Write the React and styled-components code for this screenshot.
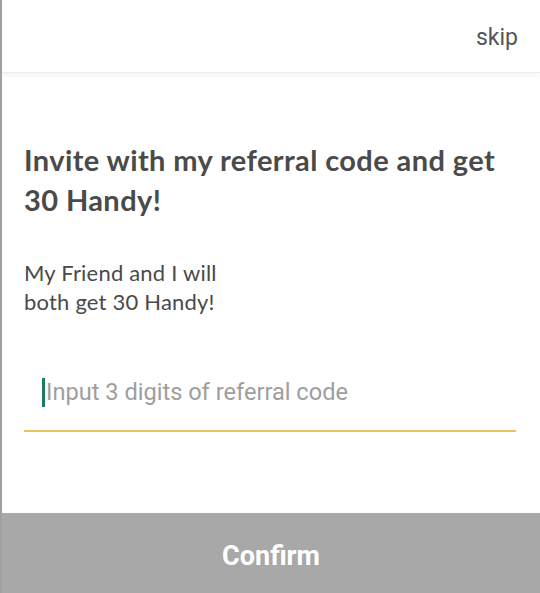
import React from "react";
import styled, { createGlobalStyle } from "styled-components";

const Global = createGlobalStyle`
  html, body { margin: 0; padding: 0; background: #fff; }
  #root { height: 593px; }
`;

const Screen = styled.div`
  height: 593px;
  display: flex;
  flex-direction: column;
  border-left: 2px solid #a0a0a0;
  box-sizing: border-box;
  background: #fff;
  overflow: hidden;
`;

const Header = styled.header`
  height: 72px;
  flex: none;
  display: flex;
  align-items: center;
  justify-content: flex-end;
  padding: 0 22px 0 0;
  box-shadow: 0 1px 0 #ececec, 0 3px 6px rgba(0, 0, 0, 0.06);
  position: relative;
  z-index: 1;
`;

const Skip = styled.button`
  border: none;
  background: none;
  padding: 0;
  font-family: Roboto, sans-serif;
  font-size: 23px;
  color: #555;
  margin-top: 2px;
  cursor: pointer;
`;

const Body = styled.main`
  flex: 1;
  display: flex;
  flex-direction: column;
  padding: 68px 24px 0 22px;
`;

const Title = styled.h1`
  margin: 0;
  font-family: Lato, sans-serif;
  font-weight: 700;
  font-size: 29px;
  letter-spacing: 0.4px;
  line-height: 40px;
  color: #4a4a4a;
`;

const Sub = styled.p`
  margin: 38px 0 0;
  font-family: Lato, sans-serif;
  font-size: 22px;
  letter-spacing: 0.2px;
  line-height: 29px;
  color: #4a4a4a;
`;

const Field = styled.label`
  margin-top: 57px;
  display: flex;
  align-items: center;
  height: 59px;
  border-bottom: 2px solid #ebc25f;
  padding: 0 0 19px 18px;
  box-sizing: border-box;
`;

const Caret = styled.span`
  width: 3px;
  height: 29px;
  background: #1c7a68;
  flex: none;
`;

const Input = styled.input`
  flex: 1;
  border: none;
  outline: none;
  padding: 0 0 0 1px;
  font-family: Roboto, sans-serif;
  font-size: 23.6px;
  color: #333;
  background: transparent;
  &::placeholder { color: #9e9e9e; }
`;

const Confirm = styled.button`
  flex: none;
  height: 80px;
  border: none;
  padding: 6px 0 0;
  background: #a8a8a8;
  color: #fff;
  font-family: Roboto, sans-serif;
  font-weight: 700;
  font-size: 27px;
  cursor: pointer;
`;

export default function App() {
  return (
    <>
      <Global />
      <Screen>
        <Header>
          <Skip>skip</Skip>
        </Header>
        <Body>
          <Title>Invite with my referral code and get 30 Handy!</Title>
          <Sub>
            My Friend and I will
            <br />
            both get 30 Handy!
          </Sub>
          <Field>
            <Caret />
            <Input placeholder="Input 3 digits of referral code" />
          </Field>
        </Body>
        <Confirm>Confirm</Confirm>
      </Screen>
    </>
  );
}
